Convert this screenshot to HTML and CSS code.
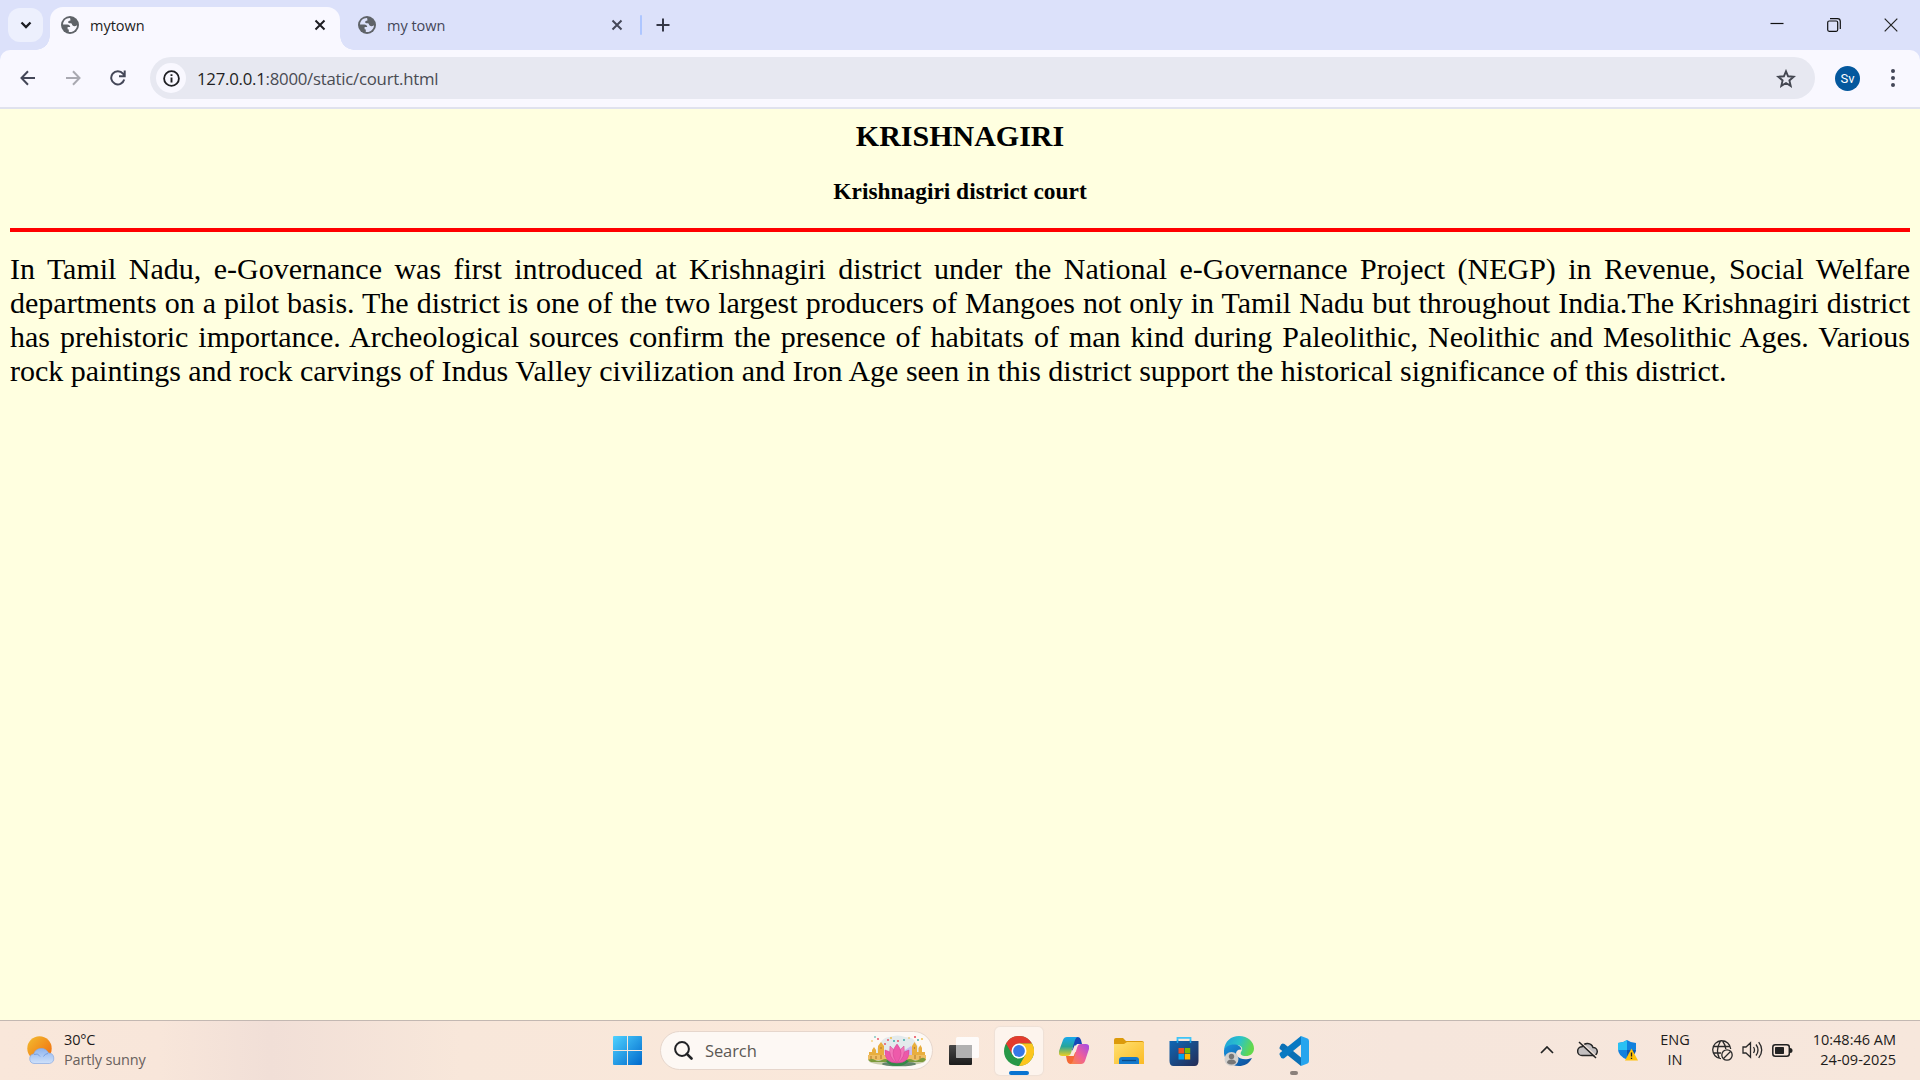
FILE: index.html
```html
<!DOCTYPE html>
<html lang="en">
<head>
<meta charset="utf-8">
<title>mytown</title>
<link rel="stylesheet" href="styles.css">
</head>
<body>
<svg class="defs" aria-hidden="true">
  <defs>
    <linearGradient id="sun" x1="0" y1="0" x2="1" y2="1"><stop offset="0" stop-color="#f3bd30"/><stop offset="1" stop-color="#f0670c"/></linearGradient>
    <linearGradient id="cloud" x1="0" y1="0" x2="0" y2="1"><stop offset="0" stop-color="#8fb4ee"/><stop offset="1" stop-color="#cfe1fa"/></linearGradient>
    <linearGradient id="win" gradientUnits="userSpaceOnUse" x1="0" y1="0" x2="29" y2="29"><stop offset="0" stop-color="#4fd2ff"/><stop offset="1" stop-color="#0069cc"/></linearGradient>
    <linearGradient id="dark" x1="0" y1="0" x2="0" y2="1"><stop offset="0" stop-color="#484848"/><stop offset="1" stop-color="#1c1c1c"/></linearGradient>
    <linearGradient id="copA" x1="0" y1="0" x2="0" y2="1"><stop offset="0" stop-color="#18a8ee"/><stop offset=".5" stop-color="#26a59a"/><stop offset="1" stop-color="#f0cf20"/></linearGradient>
    <linearGradient id="copB" x1="1" y1="0" x2="0" y2="1"><stop offset="0" stop-color="#a04bea"/><stop offset=".5" stop-color="#ee5e9c"/><stop offset="1" stop-color="#fb8a3c"/></linearGradient>
    <linearGradient id="folder" x1="0" y1="0" x2="1" y2="1"><stop offset="0" stop-color="#ffe071"/><stop offset="1" stop-color="#fbbb25"/></linearGradient>
    <linearGradient id="store" x1="0" y1="0" x2="1" y2="1"><stop offset="0" stop-color="#0f67b5"/><stop offset="1" stop-color="#252c55"/></linearGradient>
    <linearGradient id="edgeTop" x1="0" y1="0" x2="1" y2=".3"><stop offset="0" stop-color="#1f9ddd"/><stop offset=".55" stop-color="#2bc3c9"/><stop offset="1" stop-color="#63d84c"/></linearGradient>
    <linearGradient id="edgeLow" x1="0" y1="0" x2="1" y2="1"><stop offset="0" stop-color="#1995df"/><stop offset="1" stop-color="#0c4a97"/></linearGradient>
    <symbol id="globe" viewBox="0 0 18 18">
      <circle cx="9" cy="9" r="9" fill="#5f6368"/>
      <path d="M8.800 2C5 2 2.300 4.800 2 8.400h4.300c1.700 0 2.900 1 2.900 2.600H6.600v2.200l1.200.3v2.400c4.300.8 8-2.400 8.200-6.700-1.300 1-3.200 1.300-4.300.4-.9-.8-.5-1.900-1.600-2.300-1-.4-2.600.1-2.900-.9-.3-1.200.6-1.700 1.700-1.700.8 0 .6-1 .4-1.500-.2-.6.300-.8-.5-1.200Z" fill="currentColor"/>
    </symbol>
    <symbol id="close" viewBox="0 0 12 12"><path d="M1.500 1.500l9 9m0-9l-9 9" fill="none" stroke="currentColor" stroke-width="2"/></symbol>
  </defs>
</svg>

<header class="tabstrip">
  <button class="tab-search" aria-label="Search tabs"><svg width="12" height="8" viewBox="0 0 12 8"><path d="M1.500 1.500L6 6l4.500-4.500" fill="none" stroke="#1b1c22" stroke-width="2.300"/></svg></button>
  <div class="tab tab-active">
    <svg class="favicon"><use href="#globe"/></svg>
    <span class="tab-title">mytown</span>
    <svg class="tab-close"><use href="#close"/></svg>
  </div>
  <div class="tab tab-idle">
    <svg class="favicon"><use href="#globe"/></svg>
    <span class="tab-title">my town</span>
    <svg class="tab-close"><use href="#close"/></svg>
  </div>
  <span class="tab-divider"></span>
  <svg class="new-tab" width="14" height="14" viewBox="0 0 14 14"><path d="M7 .5v13M.5 7h13" stroke="#343746" stroke-width="2"/></svg>
  <div class="window-controls">
    <svg width="14" height="14" viewBox="0 0 14 14"><path d="M.5 5.500h13" stroke="#111" stroke-width="1.200"/></svg>
    <svg width="14" height="14" viewBox="0 0 14 14" fill="none" stroke="#111" stroke-width="1.200"><rect x=".7" y="3" width="10" height="10.300" rx="1.500"/><path d="M3 .7h7.500a2.800 2.800 0 0 1 2.800 2.800v7.500"/></svg>
    <svg width="14" height="14" viewBox="0 0 14 14"><path d="M.7.7l12.600 12.600m0-12.600L.7 13.300" stroke="#222" stroke-width="1.200"/></svg>
  </div>
</header>

<nav class="toolbar">
  <div class="nav-buttons">
    <svg width="16" height="16" viewBox="0 0 16 16" fill="none" stroke="#444758" stroke-width="2"><path d="M15 8H1.800M8 1.300L1.500 8 8 14.700"/></svg>
    <svg width="16" height="16" viewBox="0 0 16 16" fill="none" stroke="#a9a9b1" stroke-width="2"><path d="M1 8h13.200M8 1.300L14.500 8 8 14.700"/></svg>
    <svg width="16" height="16" viewBox="0 0 16 16" fill="none" stroke="#444758" stroke-width="2"><path d="M14.200 9.500A6.600 6.600 0 1 1 13 3.700l1.500 1.800M14.700.5v5.800H9"/></svg>
  </div>
  <div class="omnibox">
    <span class="site-info"><svg width="17" height="17" viewBox="0 0 17 17"><circle cx="8.500" cy="8.500" r="7.400" fill="none" stroke="#1f1f23" stroke-width="1.800"/><path d="M8.500 7.500v5M8.500 4.200v1.900" stroke="#1f1f23" stroke-width="1.900"/></svg></span>
    <span class="url"><span class="url-host">127.0.0.1</span>:8000/static/court.html</span>
    <svg class="star" width="20" height="19" viewBox="0 0 20 19"><path d="M10 2.300l2.100 5 5.600.5-4.300 3.600 1.300 5.500L10 14l-4.700 2.900 1.300-5.500-4.300-3.600 5.600-.5Z" fill="none" stroke="#444751" stroke-width="1.900"/></svg>
  </div>
  <span class="avatar">Sv</span>
  <svg class="kebab" width="4" height="18" viewBox="0 0 4 18" fill="#444758"><circle cx="2" cy="2" r="2"/><circle cx="2" cy="9" r="2"/><circle cx="2" cy="16" r="2"/></svg>
</nav>

<main class="page">
  <h2 class="page-title">KRISHNAGIRI</h2>
  <h3 class="page-subtitle">Krishnagiri district court</h3>
  <hr class="rule">
  <p class="story">In Tamil Nadu, e-Governance was first introduced at Krishnagiri district under the National e-Governance Project (NEGP) in Revenue, Social Welfare departments on a pilot basis. The district is one of the two largest producers of Mangoes not only in Tamil Nadu but throughout India.The Krishnagiri district has prehistoric importance. Archeological sources confirm the presence of habitats of man kind during Paleolithic, Neolithic and Mesolithic Ages. Various rock paintings and rock carvings of Indus Valley civilization and Iron Age seen in this district support the historical significance of this district.</p>
</main>

<footer class="taskbar">
  <div class="weather">
    <svg width="28" height="29" viewBox="0 0 28 29"><circle cx="12.500" cy="12.500" r="12.200" fill="url(#sun)"/><path d="M7 27.500a4.800 4.800 0 0 1-.3-9.500A8 8 0 0 1 21.500 17a5.300 5.300 0 0 1 1 10.500Z" fill="url(#cloud)" stroke="#86a9e2" stroke-width=".7"/><path d="M7 18.500q4-2 6 2M21 17.500q-3 0-4.500 3" stroke="#769fe0" fill="none"/></svg>
    <div class="weather-text"><span class="temp">30°C</span><span class="sky">Partly sunny</span></div>
  </div>

  <div class="dock">
    <svg class="start" width="29" height="29" viewBox="0 0 29 29" fill="url(#win)"><path d="M1 0h13v14H0V1q0-1 1-1ZM15 0h13q1 0 1 1v13H15ZM0 15h14v14H1q-1 0-1-1ZM15 15h14v13q0 1-1 1H15Z"/></svg>
    <div class="search">
      <svg width="19" height="19" viewBox="0 0 19 19"><circle cx="8" cy="8" r="6.900" fill="none" stroke="#202124" stroke-width="2"/><path d="M12.800 12.800l4.700 4.700" stroke="#202124" stroke-width="2.600" stroke-linecap="round"/></svg>
      <span class="search-label">Search</span>
      <svg class="lotus" width="58" height="32" viewBox="0 0 58 32">
        <path d="M8 22q-1-7 4-13 2-6 9-7 9-3 16 0 9 0 11 6 5 6 2 14Z" fill="#e3eaec"/>
        <path d="M37 15l6-4 5 5v7H37Z" fill="#c9bdf0"/>
        <ellipse cx="29" cy="26" rx="28" ry="4.500" fill="#c9cdaa"/>
        <ellipse cx="31" cy="29" rx="17" ry="2.300" fill="#66866c"/>
        <g fill="#e9ae3e"><path d="M1 17h3v-2l2-3 2 3v3h2v-7l3-4 3 4v14H1ZM56 17h-2v-4l-1.500-3-2 3v4H49v-6l-2.500-4-2.500 4v14h13v-8Z"/><path d="M0 20h20v5H0ZM39 20h19v5H39Z" fill="#efbd62"/></g>
        <path d="M3 24v-3m5 3v-3m5 3v-4m34 4v-4m5 4v-3M13 14v-2m33.500 2v-2" stroke="#b98232" stroke-width="1.200"/>
        <path d="M0 25q4-2 7 0t7 0 6 0v2H3ZM38 25q4-2 7 0t7-1 6 1l-3 2H38Z" fill="#7c9b3c"/>
        <path d="M18 26q6-4 11 1 5-5 12-1-4 5-12 5-8 0-11-5Z" fill="#348a48"/>
        <g stroke="#d04592" stroke-width=".5"><path d="M17 15q9 2 12 13-13 0-12-13ZM41 15q-9 2-12 13 13 0 12-13Z" fill="#ed59a8"/><path d="M22 11q7 5 7 17-9-5-7-17ZM36 11q-7 5-7 17 9-5 7-17Z" fill="#f376b9"/><path d="M29 9q8 9 0 19-8-10 0-19Z" fill="#ee5aaa"/></g>
        <g fill="#e8475a"><circle cx="10" cy="4" r=".9"/><circle cx="20" cy="5" r=".9"/><circle cx="30" cy="6" r=".9"/><circle cx="47" cy="2" r="1"/><circle cx="17" cy="9" r=".9"/></g><g fill="#2da7a0"><circle cx="7" cy="2" r=".8"/><circle cx="26" cy="6" r=".9"/><circle cx="36" cy="5" r=".9"/><circle cx="50" cy="5" r=".9"/></g><g fill="#efb938"><circle cx="4" cy="6" r=".8"/><circle cx="41" cy="3" r=".8"/><circle cx="54" cy="4" r=".9"/><circle cx="23" cy="3" r=".9"/></g>
      </svg>
    </div>
    <div class="app"><svg width="30" height="30" viewBox="0 0 30 30"><rect y="9" width="23" height="20" rx="1" fill="url(#dark)"/><rect x="7" y="1" width="23" height="21" rx="1.500" fill="#fff" fill-opacity=".82"/><path d="M7 9h16v13H8q-1 0-1-1Z" fill="#a9a9a9" fill-opacity=".85"/></svg></div>
    <div class="app app-current"><svg width="30" height="30" viewBox="0 0 30 30"><circle cx="15" cy="15" r="15" fill="#279847"/><path d="M2 7.500A15 15 0 0 1 28 7.500H15L8.500 18.800Z" fill="#e33b2e"/><path d="M28 7.500A15 15 0 0 1 15 30L21.500 18.700 15 7.500Z" fill="#fcc51d"/><circle cx="15" cy="15" r="7.500" fill="#fff"/><circle cx="15" cy="15" r="5.900" fill="#3678e8"/></svg></div>
    <div class="app"><svg width="30" height="30" viewBox="0 0 30 30"><path d="M15 1h4q2 0 3 3l1 4h-5l-5 7Z" fill="#1548b8"/><path d="M8 1h11q-2 0-3 3l-4 13q-1 3-4 3H3q-4 0-3-5L4 4q1-3 4-3Z" fill="url(#copA)"/><path d="M7 20h5l6-5-3 13h-4q-2 0-3-3Z" fill="#f46a35"/><path d="M22 28H11q2 0 3-3l4-13q1-4 4-4h5q4 0 3 5l-4 12q-1 3-4 3Z" fill="url(#copB)"/><path d="M15.500 9.500h3L14.700 20h-3Z" fill="#fbe9de"/></svg></div>
    <div class="app"><svg width="30" height="30" viewBox="0 0 30 30"><path d="M0 9V4q0-2 2-2h7l3 3h16q2 0 2 2v5H0Z" fill="#dc9a0b"/><path d="M0 8h10l3-2h15q2 0 2 1v21H0Z" fill="url(#folder)"/><path d="M5 28v-4q0-3 3-3h14q3 0 3 3v4Z" fill="#1479cc"/><path d="M8 24.500h14" stroke="#0b4b88" stroke-width="1.300"/></svg></div>
    <div class="app"><svg width="30" height="30" viewBox="0 0 30 30"><path d="M8.500 7V1.800h13V7" fill="none" stroke="#3fc4f7" stroke-width="1.800"/><path d="M.5 5h29v20q0 5-4 5h-21q-4 0-4-5Z" fill="url(#store)"/><path d="M8.500 7V4.500m13 0V7" fill="none" stroke="#1ca3e5" stroke-width="1.500"/><path d="M9.500 12H15v5.500H9.500Z" fill="#f25022"/><path d="M15.700 12h5.500v5.500h-5.500Z" fill="#7fba00"/><path d="M9.500 18H15v5.500H9.500Z" fill="#00a4ef"/><path d="M15.700 18h5.500v5.500h-5.500Z" fill="#ffb900"/></svg></div>
    <div class="app"><svg width="30" height="30" viewBox="0 0 30 30"><path d="M0 14C1 5 7 0 15 0c9 0 15 6 15 12.500 0 5-4 7.500-8 7.500-5 0-6-2-5-4 3-4 0-7-5-7-5 0-10 2-12 5Z" fill="url(#edgeTop)"/><path d="M0 14C2 10 6 8.500 10 8.500c4 0 7 2 7.500 5C12 13 11 18 13 20c4 4 9 4 15 2-3 6-8 8-13 8C5 30-1 22 0 14Z" fill="url(#edgeLow)"/><circle cx="7.500" cy="23" r="7" fill="#d2d0ce"/><circle cx="7.500" cy="20.500" r="2.700" fill="#777"/><path d="M3 27q0-3.500 4.500-3.500T12 27q-4.500 3-9 0Z" fill="#777"/></svg></div>
    <div class="app app-open"><svg width="30" height="30" viewBox="0 0 30 30"><path d="M1 10.500Q2.500 6 5.500 8L22 21.500V30L.8 13Q0 12 1 10.500Z" fill="#0b70b5"/><path d="M1 19.500Q2.500 24 5.500 22L22 8.500V0L.8 17Q0 18 1 19.500Z" fill="#0879c2"/><path d="M22 0l6.500 2.500q1.500.7 1.500 2.500v20q0 1.800-1.500 2.500L22 30Z" fill="#27a5ee"/></svg></div>
  </div>

  <div class="tray">
    <svg class="chevron" width="14" height="8" viewBox="0 0 14 8"><path d="M1 7l6-6 6 6" fill="none" stroke="#222" stroke-width="1.700"/></svg>
    <svg class="onedrive" width="21" height="18" viewBox="0 0 21 18"><path d="M5 14.500a4.300 4.300 0 0 1 0-8.700 6 6 0 0 1 11 .7 4 4 0 0 1 .5 8Z" fill="#c3bfc0" stroke="#262626" stroke-width="1.500"/><path d="M3 .5l17 15.500" stroke="#f8e8de" stroke-width="1.300"/><path d="M2 1l17 16" stroke="#222" stroke-width="1.500"/></svg>
    <svg class="shield" width="20" height="21" viewBox="0 0 20 21"><path d="M9 0q4 3 9 3v6q0 7-9 10.500Q0 16 0 9V3q5 0 9-3Z" fill="#1181dd"/><path d="M9 0v10H0V3q5 0 9-3Z" fill="#2ac1f3"/><path d="M9 10h9q-1 6-9 9.500Z" fill="#0c55ad"/><path d="M13.500 8.500L20 20.500H7Z" fill="#ffc20a"/><path d="M13.500 12.500v4m0 1.200v1.300" stroke="#222" stroke-width="1.300"/></svg>
    <div class="language"><span>ENG</span><span>IN</span></div>
    <svg class="network" width="21" height="21" viewBox="0 0 21 21" fill="none" stroke="#292929" stroke-width="1.300"><path d="M9 18.700A9 9 0 1 1 18.700 9M1.500 6.500h16.600M1.500 13H9M7.500 18.500Q3 10 8.500 1q1-1 2 0 3 4 3.300 8"/><circle cx="15" cy="15" r="5.200"/><path d="M11.500 18.500l7-7"/></svg>
    <svg class="volume" width="21" height="18" viewBox="0 0 21 18" fill="none" stroke="#292929" stroke-width="1.300"><path d="M1 6h3l4.500-4.300v14.600L4 12H1ZM11.500 6q2 3 0 6M14 3.500q4 5.500 0 11M16.700 1.200q6 7.800 0 15.600"/></svg>
    <svg class="battery" width="21" height="13" viewBox="0 0 21 13"><rect x=".8" y=".8" width="16.500" height="11.400" rx="2.500" fill="none" stroke="#222" stroke-width="1.500"/><rect x="3" y="3" width="9" height="7" rx=".7" fill="#222"/><path d="M18 4q2.500 0 2.500 2.500T18 9Z" fill="#222"/></svg>
    <div class="clock"><span class="time">10:48:46 AM</span><span class="date">24-09-2025</span></div>
  </div>
</footer>
</body>
</html>
```
FILE: styles.css
```css
* { box-sizing: border-box; }
body {
  margin: 0;
  width: 1920px;
  height: 1080px;
  overflow: hidden;
  display: flex;
  flex-direction: column;
  background: #dce1fa;
  font-family: "Open Sans", "Noto Sans", sans-serif;
}
svg { display: block; flex: none; }
.defs { position: absolute; width: 0; height: 0; }

/* Tab strip */
.tabstrip { height: 50px; flex: none; display: flex; align-items: center; background: #dce1fa; }
.tab-search {
  width: 35px; height: 34px; margin-left: 8px; padding: 0; border: 0; border-radius: 12px;
  background: #edf0fd; display: flex; align-items: center; justify-content: center;
}
.tab { display: flex; align-items: center; color: #444758; }
.tab-active {
  position: relative; align-self: flex-end; width: 290px; height: 43px; margin-left: 7px;
  padding: 0 14px 7px 11px; border-radius: 13px 13px 0 0; background: #f9f8ff; color: #1d1d22;
}
.tab-active::before, .tab-active::after {
  content: ""; position: absolute; bottom: 0; width: 14px; height: 14px;
}
.tab-active::before { left: -14px; background: radial-gradient(circle at 0 0, transparent 13.500px, #f9f8ff 14px); }
.tab-active::after { right: -14px; background: radial-gradient(circle at 100% 0, transparent 13.500px, #f9f8ff 14px); }
.tab-idle { width: 265px; margin-left: 18px; }
.favicon { width: 18px; height: 18px; color: #f9f8ff; }
.tab-idle .favicon { color: #dce1fa; }
.tab-title { margin-left: 11px; padding-top: 2px; font-size: 14.500px; line-height: 20px; }
.tab-close { width: 12px; height: 12px; margin-left: auto; }
.tab-divider { width: 2px; height: 20px; margin-left: 17px; border-radius: 1px; background: #aec6ff; }
.new-tab { margin-left: 14px; }
.window-controls { margin-left: auto; margin-right: 22px; display: flex; gap: 43px; }

/* Toolbar */
.toolbar {
  height: 59px; flex: none; display: flex; align-items: center; padding: 0 25px 1px 20px;
  background: #f9f8ff; border-bottom: 2px solid #e0e2ee; border-radius: 10px 10px 0 0;
}
.nav-buttons { display: flex; gap: 29px; }
.omnibox {
  flex: 1; height: 42px; margin-left: 24px; padding: 0 19px 0 6px; border-radius: 21px;
  background: #e7e8f1; display: flex; align-items: center;
}
.site-info {
  width: 30px; height: 30px; border-radius: 50%; background: #f9f8ff;
  display: flex; align-items: center; justify-content: center;
}
.url {
  margin-left: 11px; padding-top: 2px; font-size: 16.800px; line-height: 24px; letter-spacing: -.25px;
  color: #494b53; white-space: nowrap;
}
.url-host { color: #1f1f23; }
.star { margin-left: auto; }
.avatar {
  width: 25px; height: 25px; margin-left: 20px; border-radius: 50%; background: #04589e; color: #fff;
  font: 13px/25px Roboto, sans-serif; text-align: center;
}
.kebab { margin-left: 31px; }

/* Web page */
.page {
  flex: 1; min-height: 0; padding: 10px; background: #ffffe0; color: #000;
  font-family: "Liberation Serif", serif;
}
.page-title { margin: 0; font-size: 30px; line-height: 34px; text-align: center; }
.page-subtitle { margin: 25px 0 23px; font-size: 23.400px; line-height: 27px; text-align: center; }
.rule { height: 4px; margin: 0; border: 0; background: red; }
.story { margin: 20px 0 0; font-size: 30px; line-height: 34px; text-align: justify; }

/* Taskbar */
.taskbar {
  height: 60px; flex: none; display: grid; grid-template-columns: 613px 1fr auto; align-items: center;
  border-top: 1px solid #c3b8b2;
  background: linear-gradient(90deg, #f9e7da 0, #f8e6da 160px, #f1dfd7 270px, #f8e7da 460px, #fae8da 900px, #f6e6dc 1400px, #f7e7dc 1920px);
}
.weather { display: flex; align-items: center; gap: 9px; padding: 0 0 1px 27px; }
.weather-text { display: flex; flex-direction: column; font-size: 14.500px; line-height: 20px; letter-spacing: -.15px; }
.temp { color: #1d1b1a; }
.sky { color: #69615d; }
.dock { display: flex; align-items: center; height: 58px; }
.search {
  width: 273px; height: 39px; margin-left: 18px; margin-right: 7px; padding: 0 6px 0 13px;
  display: flex; align-items: center; border: 1px solid #e6d6cc; border-radius: 20px; background: #fdf8f4;
}
.search-label { margin-left: 12px; font-size: 16.500px; letter-spacing: -.1px; color: #5c5854; }
.lotus { margin-left: auto; }
.app {
  position: relative; width: 48px; height: 48px; margin-right: 7px; border-radius: 5px;
  display: flex; align-items: center; justify-content: center;
}
.app-current { background: #fdf4ed; box-shadow: 0 0 1px 1px #eee0d6; }
.app-current::after, .app-open::after {
  content: ""; position: absolute; bottom: 0; width: 20px; height: 4px; border-radius: 2px; background: #0874d1;
}
.app-open::after { width: 8px; background: #8b817b; }
.tray {
  display: flex; align-items: center; padding: 0 24px 1px 0; color: #1e1c1b;
  font-size: 14.500px; line-height: 20px;
}
.onedrive { margin-left: 23px; }
.shield { margin-left: 20px; }
.language { width: 30px; margin-left: 22px; display: flex; flex-direction: column; align-items: center; }
.network { margin-left: 22px; }
.volume { margin-left: 9px; }
.battery { margin-left: 9px; }
.clock { width: 90px; margin-left: 13px; display: flex; flex-direction: column; align-items: flex-end; white-space: nowrap; }
```
